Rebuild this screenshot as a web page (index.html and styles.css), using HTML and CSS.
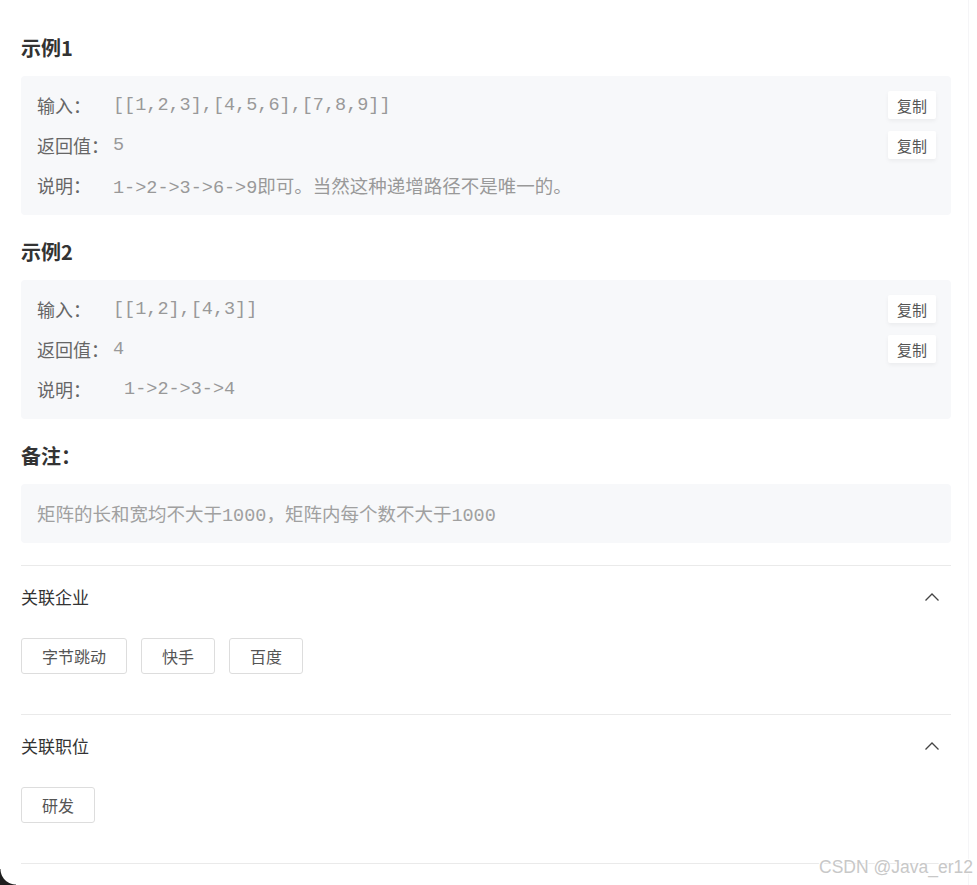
FILE: index.html
```html
<!DOCTYPE html>
<html lang="zh-CN">
<head>
<meta charset="utf-8">
<title>示例</title>
<link rel="stylesheet" href="styles.css">
</head>
<body>
<div class="page">
  <div class="content">
    <h3 class="heading">示例1</h3>
    <div class="example">
      <div class="row">
        <span class="label">输入：</span><span class="value">[[1,2,3],[4,5,6],[7,8,9]]</span>
        <button class="copy">复制</button>
      </div>
      <div class="row">
        <span class="label">返回值：</span><span class="value">5</span>
        <button class="copy">复制</button>
      </div>
      <div class="row">
        <span class="label">说明：</span><span class="value">1-&gt;2-&gt;3-&gt;6-&gt;9即可。当然这种递增路径不是唯一的。</span>
      </div>
    </div>

    <h3 class="heading">示例2</h3>
    <div class="example">
      <div class="row">
        <span class="label">输入：</span><span class="value">[[1,2],[4,3]]</span>
        <button class="copy">复制</button>
      </div>
      <div class="row">
        <span class="label">返回值：</span><span class="value">4</span>
        <button class="copy">复制</button>
      </div>
      <div class="row">
        <span class="label">说明：</span><span class="value"> 1-&gt;2-&gt;3-&gt;4</span>
      </div>
    </div>

    <h3 class="heading">备注：</h3>
    <div class="example note">
      <div class="row"><span class="value">矩阵的长和宽均不大于1000，矩阵内每个数不大于1000</span></div>
    </div>

    <section class="related">
      <div class="related-head">
        <span>关联企业</span>
        <svg class="chev" width="16" height="10" viewBox="0 0 16 10"><path d="M1.5 8.5 L8 2 L14.5 8.5" fill="none" stroke="#444" stroke-width="1.3"/></svg>
      </div>
      <div class="tags">
        <span class="tag">字节跳动</span>
        <span class="tag">快手</span>
        <span class="tag">百度</span>
      </div>
    </section>

    <section class="related">
      <div class="related-head">
        <span>关联职位</span>
        <svg class="chev" width="16" height="10" viewBox="0 0 16 10"><path d="M1.5 8.5 L8 2 L14.5 8.5" fill="none" stroke="#444" stroke-width="1.3"/></svg>
      </div>
      <div class="tags">
        <span class="tag">研发</span>
      </div>
    </section>
    <div class="last-line"></div>
  </div>
</div>
<div class="watermark">CSDN @Java_er12</div>
<div class="corner"></div>
</body>
</html>
```

FILE: styles.css
```css
html, body {
  margin: 0;
  padding: 0;
  background: #fff;
}
body {
  font-family: "Noto Sans CJK SC", "Liberation Sans", sans-serif;
  color: #333;
  height: 885px;
  overflow: hidden;
  position: relative;
}
.page {
  width: 968px;
  height: 885px;
  border-right: 1px solid #f5f5f7;
}
.content {
  padding: 34px 17px 0 21px;
}
.heading {
  margin: 23px 0 14px;
  font-size: 20px;
  line-height: 28px;
  font-weight: 700;
  color: #333;
}
.heading:first-child {
  margin-top: 0;
}
.example {
  background: #f7f8fa;
  border-radius: 4px;
  padding: 9px 15px 10px 16px;
}
.row {
  display: flex;
  align-items: center;
  height: 40px;
}
.label {
  width: 76px;
  flex: none;
  font-size: 18px;
  color: #666;
  white-space: nowrap;
}
.value {
  font-family: "Liberation Mono", "Noto Sans CJK SC", monospace;
  font-size: 18.5px;
  color: #999;
  white-space: pre;
}
.copy {
  margin-left: auto;
  height: 28px;
  width: 48px;
  padding: 0;
  border: none;
  border-radius: 2px;
  background: #fff;
  box-shadow: 0 2px 4px rgba(0, 0, 0, 0.05);
  font-family: "Noto Sans CJK SC", sans-serif;
  font-size: 15px;
  color: #555;
}
.note .value {
  color: #a0a0a0;
}
.related {
  margin-top: 22px;
  border-top: 1px solid #eaeaea;
  padding: 19px 0 40px;
}
.related + .related {
  margin-top: 0;
}
.related-head {
  display: flex;
  align-items: center;
  justify-content: space-between;
  font-size: 17px;
  line-height: 24px;
  color: #333;
  padding-right: 11px;
}
.tags {
  display: flex;
  gap: 14px;
  margin-top: 29px;
}
.tag {
  height: 34px;
  line-height: 34px;
  padding: 0 20px;
  border: 1px solid #ddd;
  border-radius: 3px;
  font-size: 16px;
  color: #555;
}
.last-line {
  border-top: 1px solid #eaeaea;
}
.watermark {
  position: absolute;
  right: 4px;
  bottom: 7px;
  font-family: "Liberation Sans", sans-serif;
  font-size: 17.5px;
  color: #c8c8c8;
  text-shadow: 1px 1px 0 #fff, -1px -1px 0 #fff, 0 0 2px #fff;
}
.corner {
  position: absolute;
  left: 0;
  bottom: 0;
  width: 16px;
  height: 16px;
  background: radial-gradient(circle at 100% 0, transparent 15px, #1e1e1e 16px);
}
```
